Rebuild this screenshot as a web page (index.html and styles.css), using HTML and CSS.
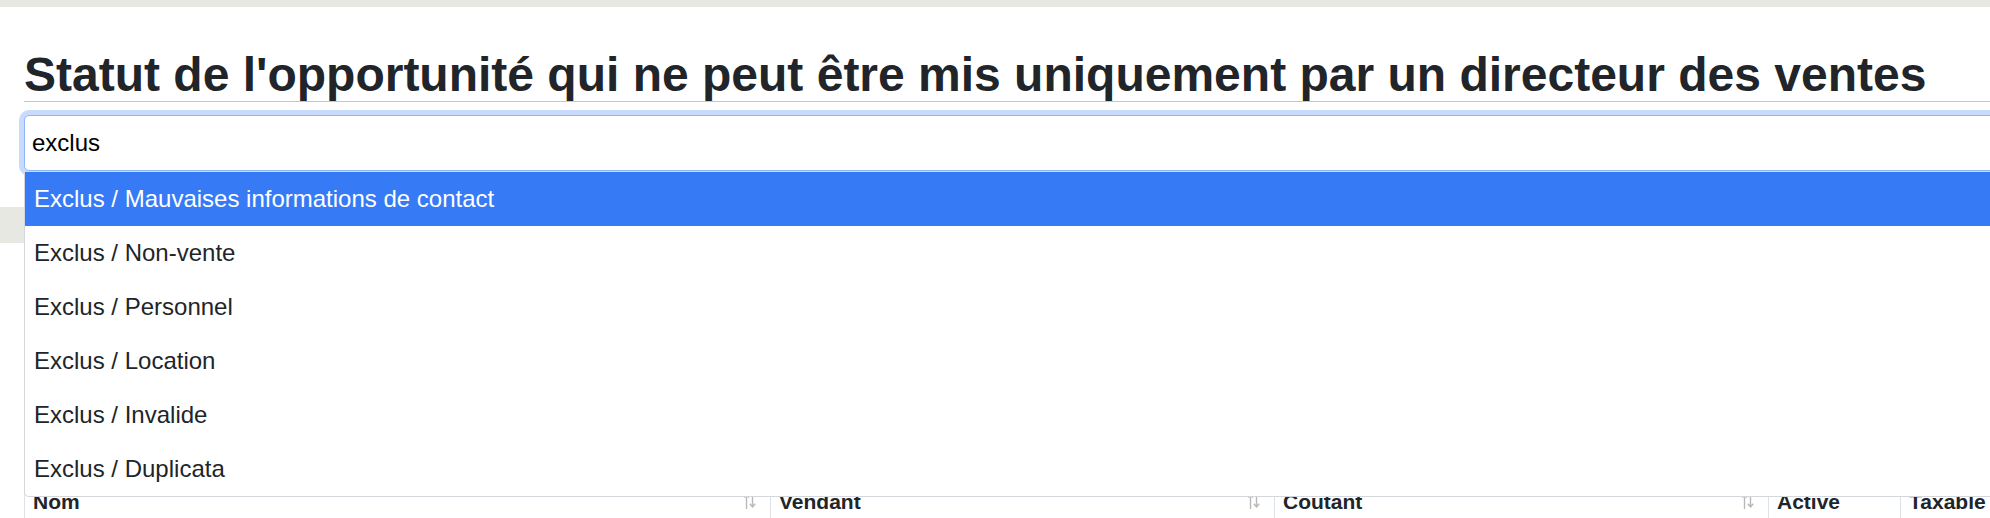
FILE: index.html
```html
<!DOCTYPE html>
<html lang="fr">
<head>
    <meta charset="UTF-8">
    <meta name="viewport" content="width=device-width, initial-scale=1.0">
    <title>Statut de l'opportunité</title>
    <link rel="stylesheet" href="styles.css">
</head>
<body>
    <div class="topbar"></div>

    <div class="page">
        <h1 class="title">Statut de l'opportunité qui ne peut être mis uniquement par un directeur des ventes</h1>

        <div class="combo">
            <input class="combo-input" type="text" value="exclus">
            <ul class="combo-list">
                <li class="combo-item is-active">Exclus / Mauvaises informations de contact</li>
                <li class="combo-item">Exclus / Non-vente</li>
                <li class="combo-item">Exclus / Personnel</li>
                <li class="combo-item">Exclus / Location</li>
                <li class="combo-item">Exclus / Invalide</li>
                <li class="combo-item">Exclus / Duplicata</li>
            </ul>
        </div>
    </div>

    <div class="toolbar"></div>

    <div class="page">
        <table class="grid">
            <thead>
                <tr>
                    <th class="col-nom">Nom
                        <svg class="sort-icon" viewBox="0 0 12 18"><path d="M2.5 3v14M0.3 5.6 2.5 2.8 4.7 5.6M8.5 1v14M5.8 11.8 8.5 15 11.2 11.8"/></svg>
                    </th>
                    <th class="col-vendant">Vendant
                        <svg class="sort-icon" viewBox="0 0 12 18"><path d="M2.5 3v14M0.3 5.6 2.5 2.8 4.7 5.6M8.5 1v14M5.8 11.8 8.5 15 11.2 11.8"/></svg>
                    </th>
                    <th class="col-coutant">Coutant
                        <svg class="sort-icon" viewBox="0 0 12 18"><path d="M2.5 3v14M0.3 5.6 2.5 2.8 4.7 5.6M8.5 1v14M5.8 11.8 8.5 15 11.2 11.8"/></svg>
                    </th>
                    <th class="col-active">Active</th>
                    <th class="col-taxable">Taxable</th>
                </tr>
            </thead>
        </table>
    </div>
</body>
</html>
```

FILE: styles.css
```css
* {
    margin: 0;
    padding: 0;
    box-sizing: border-box;
}

html, body {
    overflow: hidden;
}

body {
    background: #fff;
    color: #212529;
    font-family: "Liberation Sans", Arial, sans-serif;
}

.topbar {
    height: 7px;
    background: #e8e8e3;
}

.page {
    padding-left: 24px;
    margin-right: -60px;
}

.title {
    margin-top: 41px;
    font-size: 48px;
    line-height: 53px;
    font-weight: bold;
    color: #212529;
    border-bottom: 1px solid #c6c6c6;
}

.combo {
    position: relative;
    margin-top: 13px;
    z-index: 2;
}

.combo-input {
    display: block;
    width: 100%;
    height: 56px;
    padding: 0 7px;
    font-family: "Liberation Sans", Arial, sans-serif;
    font-size: 24px;
    color: #000;
    background: #fff;
    border: 1px solid #8fb6f5;
    border-radius: 5px;
    box-shadow: 0 0 0 5px #c9dbfc;
    outline: none;
}

.combo-list {
    position: absolute;
    top: 57px;
    left: 0;
    right: 0;
    list-style: none;
    background: #fff;
    border: 1px solid #d3d6da;
    border-top: 0;
    border-radius: 0 0 5px 5px;
}

.combo-item {
    height: 54px;
    line-height: 54px;
    padding: 0 9px;
    font-size: 24px;
    color: #212529;
}

.combo-item.is-active {
    background: #367af6;
    color: #fff;
}

.toolbar {
    margin-top: 36px;
    height: 36px;
    background: #e8e8e3;
}

.grid {
    margin-top: 239px;
    width: 100%;
    table-layout: fixed;
    border-collapse: separate;
    border-spacing: 0;
    border-left: 1px solid #dee2e6;
}

.grid th {
    padding: 8px 14px 8px 8px;
    font-size: 21px;
    line-height: 24px;
    font-weight: bold;
    text-align: left;
    color: #212529;
    border-right: 1px solid #dee2e6;
    white-space: nowrap;
}

.col-nom { width: 746px; }
.col-vendant { width: 504px; }
.col-coutant { width: 494px; }
.col-active { width: 132px; }

.sort-icon {
    float: right;
    width: 12px;
    height: 18px;
    margin-top: 2px;
    fill: none;
    stroke: #b8b8b8;
    stroke-width: 1.4;
}
```
